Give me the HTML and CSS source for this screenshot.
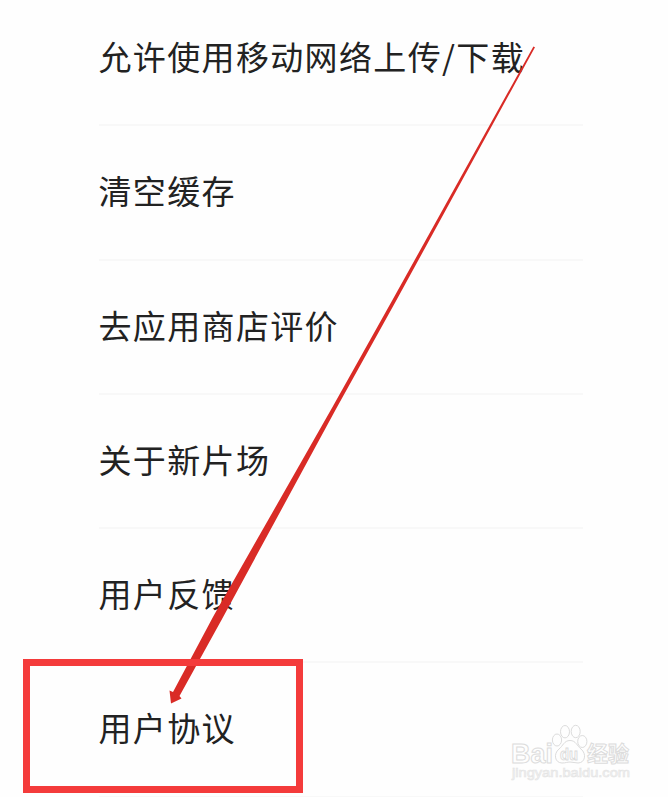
FILE: index.html
```html
<!DOCTYPE html>
<html lang="zh-CN">
<head>
	<meta charset="UTF-8">
	<title>设置</title>
	<link rel="stylesheet" href="styles.css">
</head>
<body>
<div id="box">
	<ul id="ul">
		<li>允许使用移动网络上传/下载</li>
		<li>清空缓存</li>
		<li>去应用商店评价</li>
		<li>关于新片场</li>
		<li>用户反馈</li>
		<li>用户协议</li>
	</ul>
	<!-- /#ul -->
	<svg id="arrow" width="668" height="797" viewBox="0 0 668 797">
		<path class="arrow-line" d="M533.4 46.5L535 47.2L396 301L336 409L221.5 620L179.5 696L181.5 698.5L171 703.5L169.5 690.5L173 692L213.5 616L332.5 407L393 299Z"/>
	</svg>
	<div id="mark"></div>
	<svg id="logo" width="130" height="64" viewBox="0 0 130 64">
		<g class="outline">
			<text class="bai" x="4" y="42.5" textLength="42" lengthAdjust="spacingAndGlyphs">Bai</text>
			<ellipse cx="50" cy="20" rx="4.6" ry="6"/>
			<ellipse cx="58" cy="11.7" rx="4.5" ry="6.2"/>
			<ellipse cx="68.7" cy="11.5" rx="4.5" ry="6.2"/>
			<ellipse cx="75.3" cy="21.5" rx="4.6" ry="6"/>
			<path d="M63 20.5C57 20.5 56 26 52 29C46 34 48 43 55 43C59 43 60 42 63 42C66 42 68 43 71 43C78 43 80 34 74 29C70 26 69 20.5 63 20.5Z"/>
			<text class="du" x="53" y="40" textLength="18" lengthAdjust="spacingAndGlyphs">du</text>
			<text class="jy" x="80" y="41" textLength="42" lengthAdjust="spacingAndGlyphs">经验</text>
		</g>
		<text class="url" x="5" y="57" textLength="118" lengthAdjust="spacingAndGlyphs">jingyan.baidu.com</text>
	</svg>
</div>
</body>
</html>
```
FILE: styles.css
```css
* {
	padding: 0;
	margin: 0;
}

body {
	background-color: #fefefe;
	overflow: hidden;
}

li {
	list-style: none;
	height: 134.3px;
	line-height: 129px;
	box-sizing: border-box;
	border-bottom: 2px solid #f8f8f8;
	white-space: nowrap;
}

#box {
	width: 668px;
	height: 797px;
	position: relative;
	overflow: hidden;
	font-family: "Noto Sans CJK SC", sans-serif;
}

#ul {
	width: 484px;
	margin-top: -8px;
	margin-left: 99px;
	color: #222;
	font-size: 33px;
	letter-spacing: 1.35px;
	text-indent: -.5px;
}

#arrow {
	position: absolute;
	top: 0;
	left: 0;
}

.arrow-line {
	fill: #d92b26;
}

/* 红色方框 */
#mark {
	position: absolute;
	left: 23px;
	top: 659px;
	width: 266px;
	height: 120px;
	border: 7px solid #f43b3b;
}

/* 水印 */
#logo {
	position: absolute;
	left: 507px;
	top: 720px;
}

.outline {
	fill: #fefefe;
	stroke: #dcdcdc;
	stroke-width: 1px;
}

.bai {
	font: bold 27px "Liberation Sans", sans-serif;
}

.du {
	font: bold 17px "Liberation Sans", sans-serif;
}

.jy {
	font: bold 21px "Noto Sans CJK SC", sans-serif;
}

.url {
	font: 13px "Liberation Sans", sans-serif;
	fill: #f6f6f6;
	stroke: #e4e4e4;
	stroke-width: .6px;
}
```
